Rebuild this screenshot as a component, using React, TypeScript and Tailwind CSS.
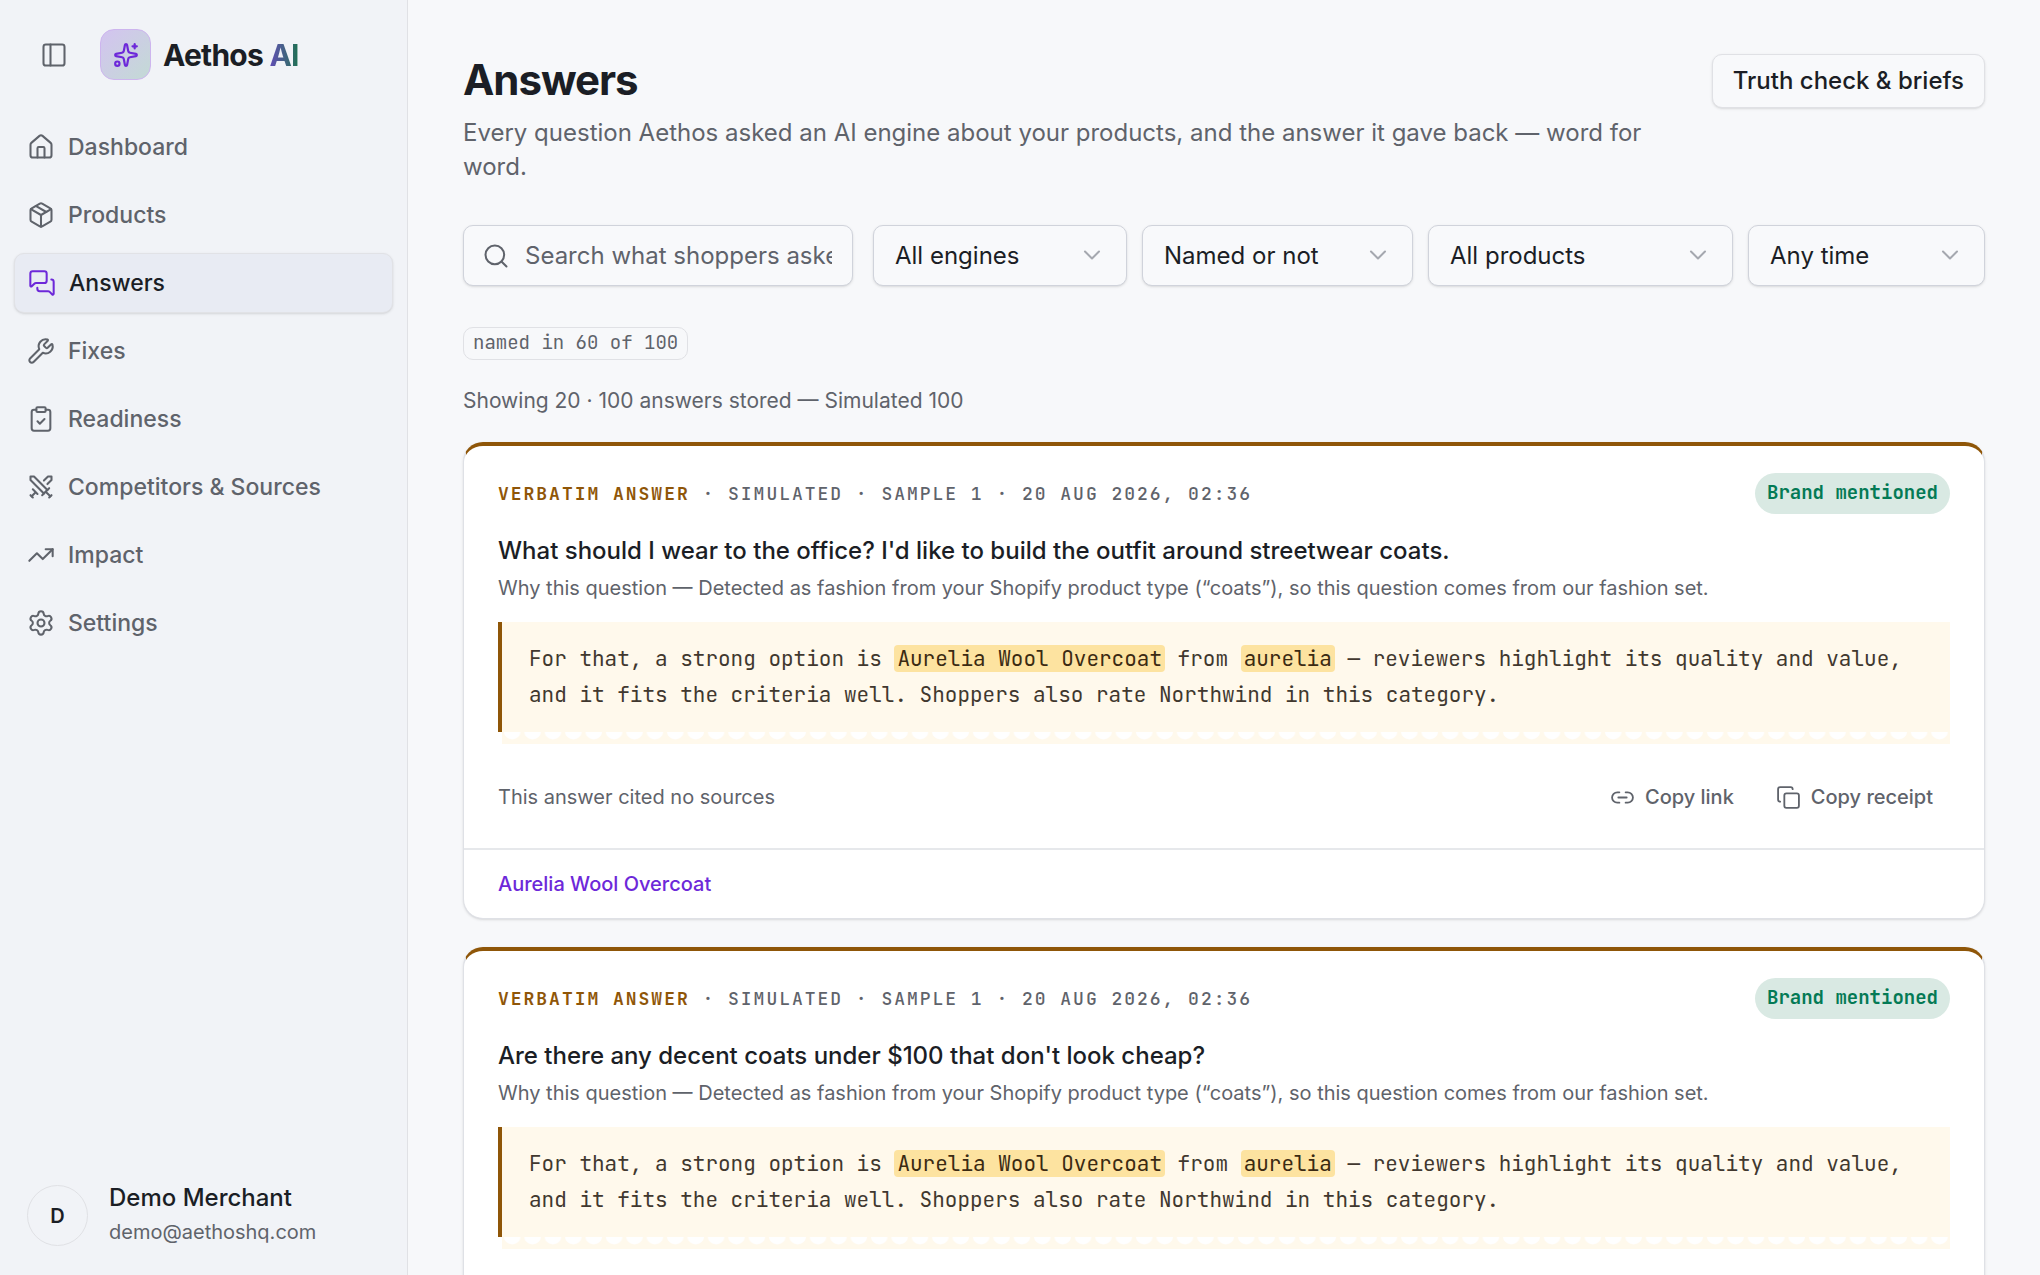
import React, { useState } from 'react';
import {
    ChevronDown,
    ClipboardCheck,
    Copy,
    House,
    Link2,
    MessagesSquare,
    Package,
    PanelLeft,
    Search,
    Settings,
    Sparkles,
    Swords,
    TrendingUp,
    Wrench,
} from 'lucide-react';

const navItems = [
    { label: 'Dashboard', icon: House },
    { label: 'Products', icon: Package },
    { label: 'Answers', icon: MessagesSquare },
    { label: 'Fixes', icon: Wrench },
    { label: 'Readiness', icon: ClipboardCheck },
    { label: 'Competitors & Sources', icon: Swords },
    { label: 'Impact', icon: TrendingUp },
    { label: 'Settings', icon: Settings },
];

const filters = [
    { id: 'engine', label: 'Engine', width: 'w-[254px]', options: ['All engines', 'Simulated'] },
    { id: 'named', label: 'Brand named', width: 'w-[271px]', options: ['Named or not', 'Named', 'Not named'] },
    { id: 'product', label: 'Product', width: 'w-[305px]', options: ['All products', 'Aurelia Wool Overcoat'] },
    { id: 'time', label: 'Time range', width: 'w-[237px]', options: ['Any time', 'Last 7 days', 'Last 30 days'] },
];

const answers = [
    { id: 1, question: "What should I wear to the office? I'd like to build the outfit around streetwear coats." },
    { id: 2, question: "Are there any decent coats under $100 that don't look cheap?" },
];

const Sidebar: React.FC = () => {
    const active = 'Answers';

    return (
        <aside className="w-[408px] shrink-0 h-full flex flex-col bg-[#f1f3f7] border-r border-[#e0e1e5]">
            <div className="flex items-center pt-[29px] pl-10">
                <button type="button" aria-label="Toggle sidebar" className="text-[#5f636b]">
                    <PanelLeft size={28} strokeWidth={1.75} />
                </button>
                <div className="ml-8 size-[51px] rounded-[14px] border border-[#cdb5ee] bg-linear-to-br from-[#d3c3f0] to-[#c3dad5] flex items-center justify-center text-[#6d28d9]">
                    <Sparkles size={26} strokeWidth={2} />
                </div>
                <div className="ml-3 text-[30px] leading-9 font-bold tracking-tight text-[#1b1e25]">
                    Aethos{' '}
                    <span className="bg-linear-to-r from-[#6248b8] to-[#17704f] bg-clip-text text-transparent">AI</span>
                </div>
            </div>

            <nav className="mt-[37px] px-[14px] flex flex-col gap-2">
                {navItems.map(({ label, icon: Icon }) => (
                    <a
                        key={label}
                        href="#"
                        aria-current={label === active ? 'page' : undefined}
                        className={`h-[60px] px-[13px] flex items-center gap-[13px] rounded-[10px] text-[23px] leading-8 font-medium ${
                            label === active
                                ? 'bg-[#e8ebf3] border border-[#e1e2e6] shadow-sm text-[#1b1e25]'
                                : 'text-[#5f636b]'
                        }`}
                    >
                        <Icon size={28} strokeWidth={1.75} className={label === active ? 'text-[#6d28d9]' : ''} />
                        {label}
                    </a>
                ))}
            </nav>

            <div className="mt-auto mb-6 pl-[27px] flex items-center gap-[21px]">
                <div className="size-[61px] rounded-full border border-[#e0e1e5] flex items-center justify-center text-xl font-semibold text-[#1b1e25]">
                    D
                </div>
                <div className="pb-[3px]">
                    <p className="text-2xl leading-9 font-medium text-[#1b1e25]">Demo Merchant</p>
                    <p className="text-xl leading-8 text-[#5f636b]">demo@aethoshq.com</p>
                </div>
            </div>
        </aside>
    );
};

// Torn-receipt edge under the quoted answer
const ScallopEdge: React.FC<{ id: string }> = ({ id }) => (
    <svg className="block w-full h-3" aria-hidden="true">
        <defs>
            <pattern id={id} width="20.39" height="12" patternUnits="userSpaceOnUse">
                <rect width="20.39" height="12" fill="#fff9ec" />
                <circle cx="10.2" cy="-1" r="8.5" fill="#ffffff" />
            </pattern>
        </defs>
        <rect width="100%" height="12" fill={`url(#${id})`} />
    </svg>
);

const Mark: React.FC<{ children: React.ReactNode }> = ({ children }) => (
    <mark className="bg-[#fde3a0] text-[#3b2a12] rounded-[4px] px-[3px]">{children}</mark>
);

const AnswerCard: React.FC<{ id: number; question: string }> = ({ id, question }) => (
    <article className="bg-white rounded-[20px] border border-t-4 border-[#dfe1e6] border-t-[#8f5608] shadow-sm">
        <div className="px-[34px] pt-[27px] pb-[29px]">
            <div className="flex items-center justify-between">
                <p className="font-['JetBrains_Mono','DejaVu_Sans_Mono',monospace] text-[18px] leading-7 font-medium tracking-[0.11em] uppercase text-[#5f636b]">
                    <span className="text-[#8f5608] font-semibold">Verbatim answer</span> · Simulated · Sample 1 · 20 Aug 2026, 02:36
                </p>
                <span className="h-[41px] px-3 flex items-center rounded-full bg-[#d9e9e3] font-['JetBrains_Mono','DejaVu_Sans_Mono',monospace] text-[19px] font-semibold text-[#047a55]">
                    Brand mentioned
                </span>
            </div>

            <h2 className="mt-[21px] text-2xl leading-8 font-medium text-[#1b1e25]">{question}</h2>
            <p className="mt-[7px] text-xl leading-7 text-[#5f636b]">
                Why this question — Detected as fashion from your Shopify product type (“coats”), so this question comes from our fashion set.
            </p>

            <blockquote className="mt-5 border-l-4 border-[#8f5608] bg-[#fff9ec] pl-[27px] pr-6 py-[19px] font-['JetBrains_Mono','DejaVu_Sans_Mono',monospace] text-[21px] leading-9 text-[#41382f]">
                For that, a strong option is <Mark>Aurelia Wool Overcoat</Mark> from <Mark>aurelia</Mark> — reviewers highlight its
                quality and value, and it fits the criteria well. Shoppers also rate Northwind in this category.
            </blockquote>
            <div className="pl-1">
                <ScallopEdge id={`scallop-${id}`} />
            </div>

            <div className="mt-[31px] flex items-center justify-between text-xl leading-7 text-[#5f636b]">
                <p>This answer cited no sources</p>
                <div className="flex gap-2 font-medium">
                    <button type="button" className="h-11 px-[17px] flex items-center gap-[10px]">
                        <Link2 size={25} strokeWidth={1.75} />
                        Copy link
                    </button>
                    <button type="button" className="h-11 px-[17px] flex items-center gap-[10px]">
                        <Copy size={25} strokeWidth={1.75} />
                        Copy receipt
                    </button>
                </div>
            </div>
        </div>

        <div className="border-t-2 border-[#e6e8eb] px-[34px] py-5">
            <a href="#" className="block w-fit text-xl leading-7 font-medium text-[#6d28d9]">Aurelia Wool Overcoat</a>
        </div>
    </article>
);

const App: React.FC = () => {
    const [query, setQuery] = useState('');

    return (
        <div className="h-screen flex overflow-hidden bg-[#f7f8fa] font-['Inter',sans-serif] text-[#1b1e25]">
            <Sidebar />

            <main className="flex-1 min-w-0 overflow-y-auto [scrollbar-width:none] px-[55px] py-[54px]">
                {/* Page header */}
                <header className="flex items-start justify-between gap-6">
                    <div className="max-w-[1200px]">
                        <h1 className="text-[42px] leading-[52px] font-bold tracking-tight">Answers</h1>
                        <p className="mt-[10px] text-2xl leading-[34px] text-[#5f636b]">
                            Every question Aethos asked an AI engine about your products, and the answer it gave back — word for word.
                        </p>
                    </div>
                    <button type="button" className="h-[54px] px-5 shrink-0 rounded-[10px] border border-[#e0e1e5] shadow-sm bg-[#f8f9fb] text-2xl font-medium">
                        Truth check &amp; briefs
                    </button>
                </header>

                {/* Filters */}
                <div className="mt-[41px] flex gap-5">
                    <label className="flex-1 min-w-0 h-[61px] pl-[18px] pr-5 flex items-center gap-[15px] rounded-[10px] border border-[#d0d3db] shadow-sm bg-[#f8f9fb]">
                        <Search size={28} strokeWidth={1.75} className="shrink-0 text-[#5f636b]" />
                        <input
                            type="text"
                            aria-label="Search questions"
                            placeholder="Search what shoppers asked"
                            value={query}
                            onChange={(e) => setQuery(e.target.value)}
                            className="w-full min-w-0 bg-transparent text-2xl placeholder:text-[#5f636b] focus:outline-none"
                        />
                    </label>
                    <div className="flex gap-[15px]">
                        {filters.map(filter => (
                            <div key={filter.id} className={`relative ${filter.width}`}>
                                <select
                                    id={filter.id}
                                    aria-label={filter.label}
                                    className="w-full h-[61px] pl-[21px] pr-14 appearance-none rounded-[10px] border border-[#d0d3db] shadow-sm bg-[#f8f9fb] text-2xl"
                                >
                                    {filter.options.map(option => <option key={option}>{option}</option>)}
                                </select>
                                <ChevronDown size={28} strokeWidth={1.75} className="absolute right-[21px] top-4 pointer-events-none text-[#a5a8af]" />
                            </div>
                        ))}
                    </div>
                </div>

                <div className="mt-[41px] w-fit h-[33px] px-[9px] flex items-center rounded-[10px] border border-[#e0e1e5] font-['JetBrains_Mono','DejaVu_Sans_Mono',monospace] text-[19px] text-[#5f636b]">
                    named in 60 of 100
                </div>
                <p className="mt-[27px] text-[21px] leading-7 text-[#5f636b]">Showing 20 · 100 answers stored — Simulated 100</p>

                <div className="mt-[27px] flex flex-col gap-7">
                    {answers.map(answer => <AnswerCard key={answer.id} {...answer} />)}
                </div>
            </main>
        </div>
    );
};

export default App;
